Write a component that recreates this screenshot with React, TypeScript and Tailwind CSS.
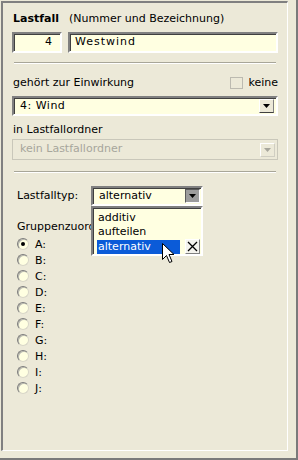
import React from "react";

const font = { fontFamily: '"DejaVu Sans", Verdana, sans-serif' };

const Arrow = ({ color = "#000" }: { color?: string }) => (
  <svg width="7" height="4" viewBox="0 0 7 4">
    <polygon points="0,0 7,0 3.5,4" fill={color} />
  </svg>
);

const DropButton = ({ pressed = false }: { pressed?: boolean }) => (
  <div
    className={
      "w-[15px] h-[14px] flex items-center justify-center border " +
      (pressed
        ? "bg-[#9c9c9c] border-t-[#5a5a5a] border-l-[#5a5a5a] border-r-white border-b-white"
        : "bg-[#ECE9D8] border-t-white border-l-white border-r-[#808080] border-b-[#404040]")
    }
  >
    <Arrow />
  </div>
);

const Sunken = "border-2 border-t-[#808080] border-l-[#808080] border-r-white border-b-white shadow-[inset_1px_1px_0_#404040]";

const Radio = ({ label, checked = false }: { label: string; checked?: boolean }) => (
  <div className="h-4 flex items-center pl-[5px] gap-[6px]">
    <div className="w-3 h-3 rounded-full border border-t-[#7c7c7c] border-l-[#7c7c7c] border-r-[#d8d6c8] border-b-[#d8d6c8] bg-[#FFFFE1] flex items-center justify-center shadow-[inset_1px_1px_0_#b8b8b0]">
      {checked && <div className="w-1 h-1 rounded-full bg-black" />}
    </div>
    <span className="leading-[13px]">{label}</span>
  </div>
);

export default function App() {
  return (
    <div
      className="w-[298px] h-[460px] bg-[#ECE9D8] border-r-2 border-b-2 border-[#7a7a7a] pl-[1px] pt-[1px] text-[11px] text-black"
      style={font}
    >
      <div className="relative w-[287px] h-[450px] border-l-2 border-t-2 border-l-[#808080] border-t-[#808080] border-r border-b border-r-white border-b-white px-[9px]">
        <div className="mt-[9px] h-[13px] leading-[13px] pl-[1px] flex">
          <span className="font-bold">Lastfall</span>
          <span className="ml-[10px]">(Nummer und Bezeichnung)</span>
        </div>

        <div className="mt-[7px] flex gap-[6px]">
          <div className={"w-[50px] h-[21px] bg-[#FFFFE1] flex items-center justify-end pr-[7px] tracking-[1px] " + Sunken}>4</div>
          <div className={"w-[210px] h-[21px] bg-[#FFFFE1] flex items-center pl-[5px] tracking-[1px] " + Sunken}>Westwind</div>
        </div>

        <div className="mt-[9px] mx-[2px] border-t border-b border-t-[#a8a698] border-b-white" />

        <div className="mt-[12px] h-[13px] leading-[13px] pl-[1px] flex items-center justify-between">
          <span>gehört zur Einwirkung</span>
          <div className="flex items-center gap-[5px]">
            <div className="w-[13px] h-[12px] border border-[#bcbab0] bg-[#ECE9D8]" />
            <span>keine</span>
          </div>
        </div>

        <div className={"mt-[7px] h-[20px] bg-[#FFFFE1] flex items-center justify-between pl-[6px] pr-[2px] tracking-[0.5px] " + Sunken}>
          <span>4: Wind</span>
          <DropButton />
        </div>

        <div className="mt-[7px] h-[13px] leading-[13px] pl-[1px]">in Lastfallordner</div>

        <div className="mt-[3px] h-[21px] border border-[#c9c7ba] flex items-center justify-between pl-[7px] pr-[2px] text-[#a7a69c]">
          <span>kein Lastfallordner</span>
          <div className="w-[15px] h-[14px] flex items-center justify-center border border-t-white border-l-white border-r-[#d0cec2] border-b-[#d0cec2]">
            <Arrow color="#a7a69c" />
          </div>
        </div>

        <div className="mt-[11px] mx-[2px] border-t border-b border-t-[#a8a698] border-b-white" />

        <div className="relative mt-[13px] h-[20px] flex items-center pl-[5px]">
          <span className="w-[74px]">Lastfalltyp:</span>
          <div className={"w-[112px] h-[20px] bg-[#FFFFE1] flex items-center justify-between pl-[6px] pr-[1px] " + Sunken}>
            <span>alternativ</span>
            <DropButton pressed />
          </div>

          <div className={"absolute left-[79px] top-[20px] z-10 w-[112px] h-[50px] bg-[#FFFFE1] pl-[4px] pt-[3px] " + Sunken}>
            <div className="h-[14px] leading-[14px] pl-[1px]">additiv</div>
            <div className="h-[14px] leading-[14px] pl-[1px]">aufteilen</div>
            <div className="flex items-center">
              <div className="w-[83px] h-[14px] leading-[14px] pl-[1px] bg-[#0B5BD8] text-white">alternativ</div>
              <div className="ml-[5px] w-[15px] h-[15px] border border-t-white border-l-white border-r-[#808080] border-b-[#808080] bg-[#f4f3ee] flex items-center justify-center">
                <svg width="11" height="11" viewBox="0 0 11 11">
                  <path d="M1 1 L10 10 M10 1 L1 10" stroke="#000" strokeWidth="1.3" />
                </svg>
              </div>
            </div>
          </div>

          <svg className="absolute left-[150px] top-[57px] z-20" width="13" height="21" viewBox="0 0 13 21">
            <path
              d="M0.5 0.5 L0.5 16.5 L4.5 12.5 L7.5 19.5 L10 18.5 L7 11.5 L12 11.5 Z"
              fill="#fff"
              stroke="#000"
              strokeWidth="1"
            />
          </svg>
        </div>

        <div className="mt-[14px] h-[13px] ml-[5px] w-[74px] overflow-hidden">
          <div className="leading-[13px] whitespace-nowrap">Gruppenzuordnung</div>
        </div>

        <div className="mt-[3px] flex flex-col">
          <Radio label="A:" checked />
          <Radio label="B:" />
          <Radio label="C:" />
          <Radio label="D:" />
          <Radio label="E:" />
          <Radio label="F:" />
          <Radio label="G:" />
          <Radio label="H:" />
          <Radio label="I:" />
          <Radio label="J:" />
        </div>
      </div>
    </div>
  );
}
